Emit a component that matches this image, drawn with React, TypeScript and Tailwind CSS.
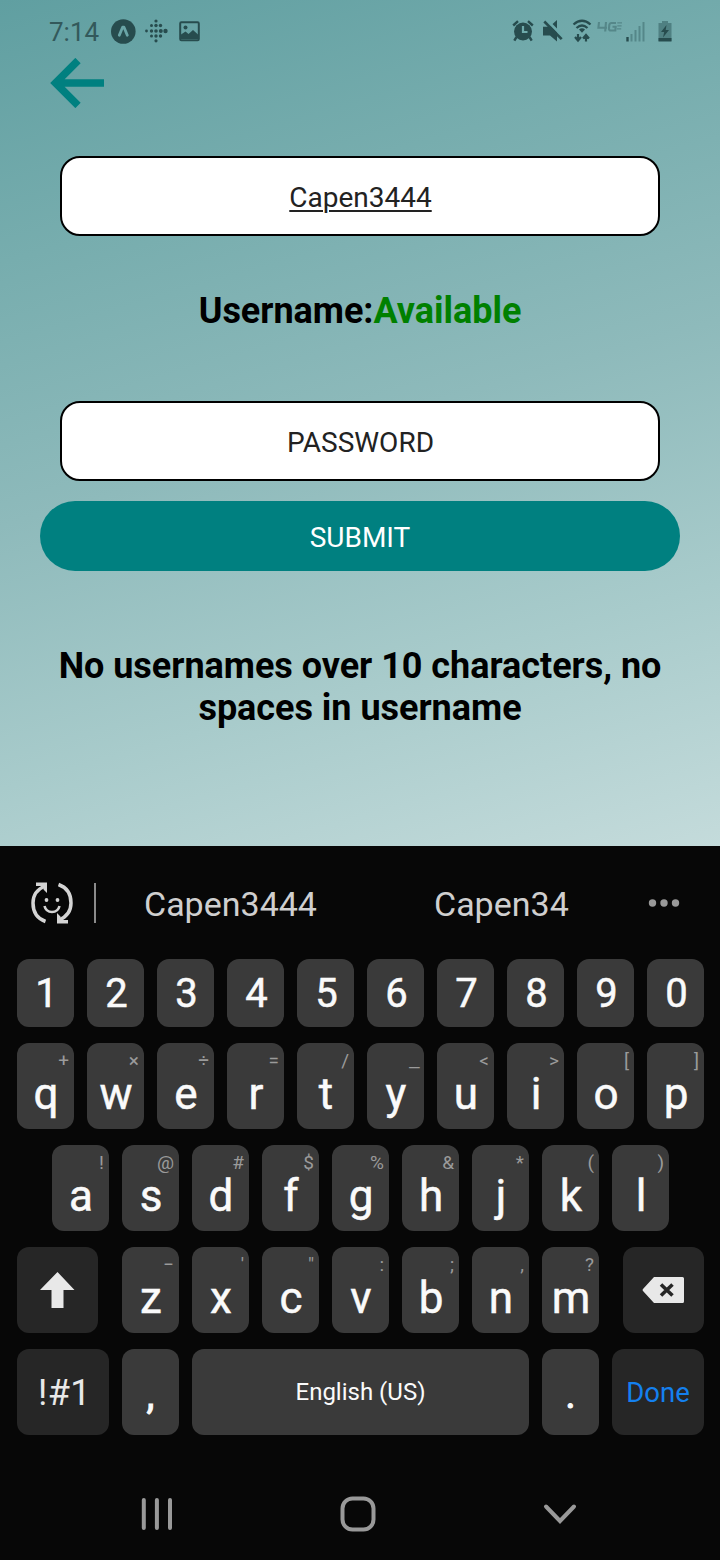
import type { ReactNode } from "react";

const hintClass = "absolute top-[8px] right-[5px] text-[19px] leading-[19px] text-[#9b9b9b] [-webkit-text-stroke:0px]";

function Key({ label, hint, wideHint }: { label: string; hint?: string; wideHint?: boolean }) {
  return (
    <div className="relative flex h-[86px] w-[57px] shrink-0 justify-center rounded-[12px] bg-[#3a3a3a] pt-[24px] pl-px text-[44px] leading-[54px] text-[#fafafa] [-webkit-text-stroke:0.5px_#fafafa]">
      {hint && <span className={`${hintClass} ${wideHint ? "scale-x-125" : ""}`}>{hint}</span>}
      {label}
    </div>
  );
}

function PunctuationKey({ label }: { label: string }) {
  return (
    <div className="flex h-[86px] w-[57px] shrink-0 justify-center rounded-[12px] bg-[#3a3a3a] pt-[20px] text-[40px] leading-[52px] text-[#fafafa] [-webkit-text-stroke:1px_#fafafa]">
      {label}
    </div>
  );
}

function DarkKey({ wide, children }: { wide?: boolean; children: ReactNode }) {
  return (
    <div className={`flex h-[86px] shrink-0 items-center justify-center rounded-[12px] bg-[#262626] ${wide ? "w-[92px]" : "w-[81px]"}`}>
      {children}
    </div>
  );
}

function StatusBar() {
  return (
    <div className="flex h-[58px] items-start pt-[16px] text-[#274c4e]">
      <div className="ml-[49px] w-[61px] text-[26px] leading-[32px] text-[#33595b]">7:14</div>
      <svg className="mt-[3px]" width="26" height="26" viewBox="0 0 26 26">
        <circle cx="13.3" cy="12.5" r="12.3" fill="currentColor" />
        <path d="M9.3 16.2L12.6 8.2H14L17.3 16.2" fill="none" stroke="#6aa5a7" strokeWidth="2.8" strokeLinecap="round" strokeLinejoin="round" />
      </svg>
      <svg className="mt-[3px] ml-[8px]" width="24" height="24" viewBox="0 0 24 24" fill="currentColor">
        {[[12, 2, 1.6], [7.5, 6.5, 1.5], [12, 6.5, 1.7], [16.5, 6.5, 1.7], [2.5, 12, 1.4], [7.5, 12, 1.7], [12, 12, 1.8], [16.8, 12, 2], [21.5, 12, 2.2], [7.5, 17, 1.5], [12, 17, 1.7], [16.5, 17, 1.7], [12, 21.8, 1.6]].map(([x, y, r]) => (
          <circle key={`${x}-${y}`} cx={x} cy={y} r={r} />
        ))}
      </svg>
      <svg className="mt-[5px] ml-[11px]" width="21" height="21" viewBox="0 0 21 21">
        <rect x="1.2" y="1.2" width="18.6" height="18" rx="1.2" fill="none" stroke="currentColor" strokeWidth="2" />
        <circle cx="6.5" cy="6.5" r="2" fill="currentColor" />
        <path d="M2 13.5L6.5 10.5L9.5 13L14 9L19 13.5V18H2Z" fill="currentColor" />
      </svg>
      <svg className="mt-[4px] ml-[312px]" width="22" height="23" viewBox="0 0 22 23">
        <circle cx="11" cy="11.5" r="9" fill="currentColor" />
        <path d="M1.2 5.5L6 1.2M20.8 5.5L16 1.2M4.5 17L2.3 20.6M17.5 17L19.7 20.6" stroke="currentColor" strokeWidth="2.4" />
        <path d="M11 6V12H15.5" fill="none" stroke="#6eaaab" strokeWidth="2.2" />
      </svg>
      <svg className="mt-[4px] ml-[8px]" width="22" height="22" viewBox="0 0 22 22">
        <path d="M1 6.8H7.5L15 0V21.5L8 15.5H1Z" fill="currentColor" />
        <path d="M4.2 -0.2L21.5 17" stroke="#6eaaab" strokeWidth="3" />
        <path d="M2.3 1.5L19.7 19.2" stroke="currentColor" strokeWidth="2.6" />
      </svg>
      <svg className="mt-[3px] ml-[8px]" width="20" height="24" viewBox="0 0 20 24" fill="none" stroke="currentColor">
        <path d="M1.5 5.5Q10 -2 18.5 5.5M4.5 9Q10 4 15.5 9" strokeWidth="2.3" />
        <path d="M7 10.5Q10 8 13 10.5L10 13.8Z" fill="currentColor" stroke="none" />
        <path d="M6 15V21.5M3 18L6 21.5L9 18M14 22.5V16M11 19.5L14 16L17 19.5" strokeWidth="2.2" />
      </svg>
      <svg className="mt-[5px] ml-[5px]" width="26" height="12" viewBox="0 0 26 12" fill="none" stroke="#558789" strokeWidth="2.1">
        <path d="M2 1L1.4 6.8H10M9 1L8.2 10.5M19 2H14.5Q12.6 2 12.3 4L12 7.3Q11.8 9.5 14 9.5H18.3L18.7 5.8H15.5" />
        <path d="M20.3 1.8H25M20.3 4.8H24.6M20 7.8H24.2" strokeWidth="1.3" />
      </svg>
      <svg className="mt-[6px] ml-[3px]" width="19" height="21" viewBox="0 0 19 21">
        <path d="M1.5 15V19.5" stroke="currentColor" strokeWidth="2.4" />
        <path d="M5.5 12V19.5M9.5 8V19.5M13.5 4V19.5M17.5 0V19.5" stroke="#558789" strokeWidth="2" />
      </svg>
      <svg className="mt-[5px] ml-[13px]" width="14" height="21" viewBox="0 0 14 21">
        <path d="M.5 2H4V0H10V2H13.5V20H.5Z" fill="#4f8082" />
        <path d="M.5 17H13.5V20.5H.5Z" fill="currentColor" />
        <path d="M8.5 4L3 11H6.2L5 16.5L11 9H7.7Z" fill="currentColor" />
      </svg>
    </div>
  );
}

const inputClass = "mx-[60px] flex h-[80px] items-center justify-center rounded-[20px] border-2 border-black bg-white pt-[3px] pl-px text-[28px] text-[#222]";

export default function App() {
  const topHints = ["+", "×", "÷", "=", "/", "_", "<", ">", "[", "]"];
  const midHints = ["!", "@", "#", "$", "%", "&", "*", "(", ")"];
  const lowHints = ["−", "'", "\"", ":", ";", ",", "?"];
  return (
    <div className="flex h-[1560px] w-[720px] flex-col overflow-hidden bg-[#070707] font-[Roboto,sans-serif]">
      <main className="flex h-[846px] shrink-0 flex-col bg-[linear-gradient(164deg,#609fa1_0%,#77adae_25%,#8ebabb_50%,#a8cbcb_75%,#c4dbdb_100%)]">
        <StatusBar />
        <svg className="ml-[50px] shrink-0" width="55" height="50" viewBox="0 0 55 50" fill="none" stroke="#008080" strokeWidth="7.5">
          <path d="M28 2.5L5.5 25L28 47.5M4 25H54" />
        </svg>
        <div className={`${inputClass} mt-[48px]`}>
          <span className="underline decoration-[1.5px] underline-offset-[3px]">Capen3444</span>
        </div>
        <p className="mt-[54px] text-center text-[36px] leading-[42px] font-bold tracking-[-0.03px] text-black">Username:<span className="text-[#008000]">Available</span></p>
        <div className={`${inputClass} mt-[69px]`}>PASSWORD</div>
        <button className="mx-[40px] mt-[20px] flex h-[70px] items-center justify-center rounded-full bg-[#008080] pt-[3px] text-[28px] text-white">SUBMIT</button>
        <p className="mt-[74px] text-center text-[36px] leading-[42px] font-bold tracking-[-0.03px] text-black">No usernames over 10 characters, no<br />spaces in username</p>
      </main>
      <section className="flex h-[113px] shrink-0 items-center text-[34px] text-[#cfcfcf]">
        <svg className="ml-[30px]" width="44" height="44" viewBox="0 0 44 44" fill="none" stroke="#d4d4d4" strokeWidth="3.5">
          <path d="M15.5 40.5Q3 36 3 22Q3 10 15 5M28.5 3.5Q41 8 41 22Q41 34 29 39" />
          <path d="M6 1.5H17V12L13.5 8.5V5H6ZM38 42.5H27V32L30.5 35.5V39H38Z" fill="#d4d4d4" stroke="none" />
          <circle cx="16.5" cy="19" r="1.9" fill="#d4d4d4" stroke="none" />
          <circle cx="27.5" cy="19" r="1.9" fill="#d4d4d4" stroke="none" />
          <path d="M14.5 25Q16 31 22 31Q28 31 29.5 25" strokeWidth="2.6" />
        </svg>
        <div className="ml-[20px] h-[40px] w-[2px] bg-[#8a8a8a]" />
        <span className="ml-[48px] w-[290px] pt-[3px]">Capen3444</span>
        <span className="w-[214px] pt-[3px]">Capen34</span>
        <svg width="32" height="8" viewBox="0 0 32 8" fill="#999">
          <circle cx="4.5" cy="4" r="3.7" /><circle cx="16" cy="4" r="3.7" /><circle cx="27.5" cy="4" r="3.7" />
        </svg>
      </section>
      <section className="flex flex-col gap-[16px] pr-[16px] pl-[17px]">
        <div className="flex gap-[13px]">
          {"1234567890".split("").map((n) => (
            <div key={n} className="flex h-[68px] w-[57px] shrink-0 items-center justify-center rounded-[12px] bg-[#3a3a3a] pt-[2px] pl-[2px] text-[40px] leading-[48px] text-[#fafafa] [-webkit-text-stroke:0.5px_#fafafa]">{n}</div>
          ))}
        </div>
        <div className="flex gap-[13px]">
          {"qwertyuiop".split("").map((c, i) => <Key key={c} label={c} hint={topHints[i]} wideHint={topHints[i] === "_"} />)}
        </div>
        <div className="flex gap-[13px] pl-[35px]">
          {"asdfghjkl".split("").map((c, i) => <Key key={c} label={c} hint={midHints[i]} />)}
        </div>
        <div className="flex justify-between">
          <DarkKey>
            <svg width="36" height="38" viewBox="0 0 36 38" fill="#e8e8e8"><path d="M17.5 1L34.5 19H23.5V37H11.5V19H0Z" /></svg>
          </DarkKey>
          <div className="flex gap-[13px]">
            {"zxcvbnm".split("").map((c, i) => <Key key={c} label={c} hint={lowHints[i]} />)}
          </div>
          <DarkKey>
            <svg className="mr-[2px]" width="42" height="26" viewBox="0 0 42 26"><path d="M12 0H40.5Q42 0 42 1.5V24.5Q42 26 40.5 26H12L1 14Q0 13 1 12Z" fill="#e8e8e8" /><path d="M19 7.5L30.5 18.5M30.5 7.5L19 18.5" stroke="#262626" strokeWidth="3.6" /></svg>
          </DarkKey>
        </div>
        <div className="flex gap-[13px]">
          <DarkKey wide><span className="pt-[2px] pl-[3px] text-[36px] tracking-[0.4px] text-[#e8e8e8]">!#1</span></DarkKey>
          <PunctuationKey label="," />
          <div className="flex h-[86px] w-[337px] shrink-0 items-center justify-center rounded-[12px] bg-[#3a3a3a] text-[24px] text-[#fafafa]">English (US)</div>
          <PunctuationKey label="." />
          <DarkKey wide><span className="pt-[2px] text-[27.5px] text-[#1480ef]">Done</span></DarkKey>
        </div>
      </section>
      <nav className="mt-[61px] flex items-center">
        <svg className="ml-[141px]" width="32" height="34" viewBox="0 0 32 34" stroke="#999" strokeWidth="4" strokeLinecap="round"><path d="M2.8 3V31M15.9 3V31M29 3V31" /></svg>
        <svg className="ml-[167px]" width="36" height="36" viewBox="0 0 36 36" fill="none" stroke="#999" strokeWidth="4"><rect x="2.5" y="2.5" width="31" height="31" rx="10" /></svg>
        <svg className="ml-[167px]" width="34" height="22" viewBox="0 0 34 22" fill="none" stroke="#999" strokeWidth="4" strokeLinecap="round"><path d="M3 3.5L17 18L31 3.5" /></svg>
      </nav>
    </div>
  );
}
